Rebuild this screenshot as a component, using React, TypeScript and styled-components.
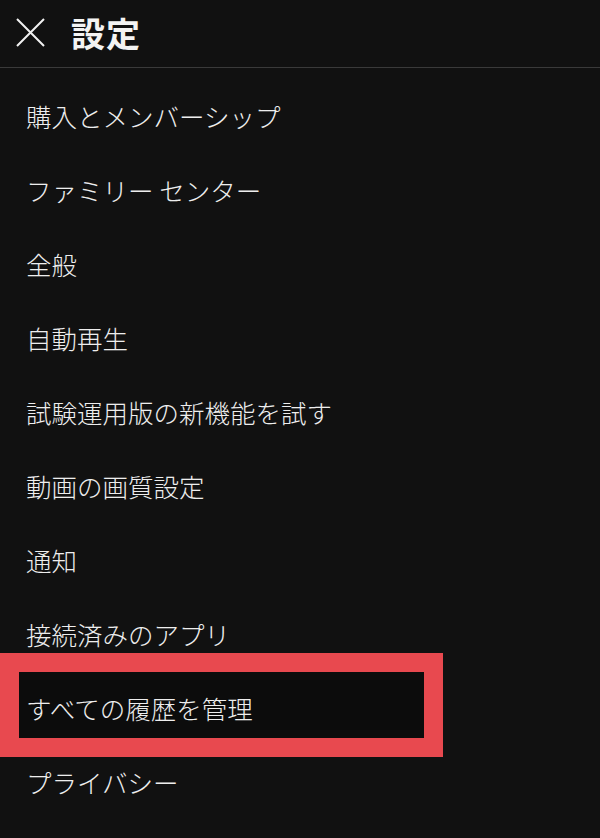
import styled, { createGlobalStyle } from "styled-components";

const GlobalStyle = createGlobalStyle`
  html, body {
    margin: 0;
    padding: 0;
    background: #111111;
  }
  body {
    font-family: "Noto Sans CJK JP", "Noto Sans", sans-serif;
    color: #f1f1f1;
  }
`;

const items = [
  "購入とメンバーシップ",
  "ファミリー センター",
  "全般",
  "自動再生",
  "試験運用版の新機能を試す",
  "動画の画質設定",
  "通知",
  "接続済みのアプリ",
  "すべての履歴を管理",
  "プライバシー",
];

export default function App() {
  return (
    <>
      <GlobalStyle />
      <Page>
        <Header>
          <CloseButton aria-label="閉じる">
            <svg width="29" height="29" viewBox="0 0 29 29">
              <path
                d="M1 1 L28 28 M28 1 L1 28"
                stroke="#f1f1f1"
                strokeWidth="2"
                fill="none"
              />
            </svg>
          </CloseButton>
          <Title>設定</Title>
        </Header>
        <List>
          {items.map((label) => (
            <Row key={label} $marked={label === "すべての履歴を管理"}>
              <Label>{label}</Label>
            </Row>
          ))}
        </List>
      </Page>
    </>
  );
}

const Page = styled.div`
  width: 600px;
  height: 838px;
  background: #111111;
  overflow: hidden;
`;

const Header = styled.header`
  height: 67px;
  display: flex;
  align-items: center;
  gap: 26px;
  padding-left: 16px;
  border-bottom: 1px solid #3a3a3a;
`;

const CloseButton = styled.button`
  display: flex;
  align-items: center;
  justify-content: center;
  padding: 0;
  margin-top: -2px;
  border: none;
  background: none;
  width: 29px;
  height: 29px;
`;

const Title = styled.h1`
  margin: 0;
  margin-top: -3px;
  font-size: 34px;
  font-weight: 700;
  letter-spacing: 1px;
  color: #f3f3f3;
`;

const List = styled.ul`
  list-style: none;
  margin: 0;
  padding: 10px 0 0;
`;

const Row = styled.li<{ $marked?: boolean }>`
  position: relative;
  height: 74px;
  display: flex;
  align-items: center;
  padding-left: 26px;

  ${(p) =>
    p.$marked &&
    `
    &::before {
      content: "";
      position: absolute;
      left: 0;
      top: -17px;
      width: 443px;
      height: 104px;
      box-sizing: border-box;
      border: 19px solid #e8494f;
      background: #0c0c0c;
    }
  `}
`;

const Label = styled.span`
  position: relative;
  font-size: 25.5px;
  font-weight: 300;
  color: #eeeeee;
`;
